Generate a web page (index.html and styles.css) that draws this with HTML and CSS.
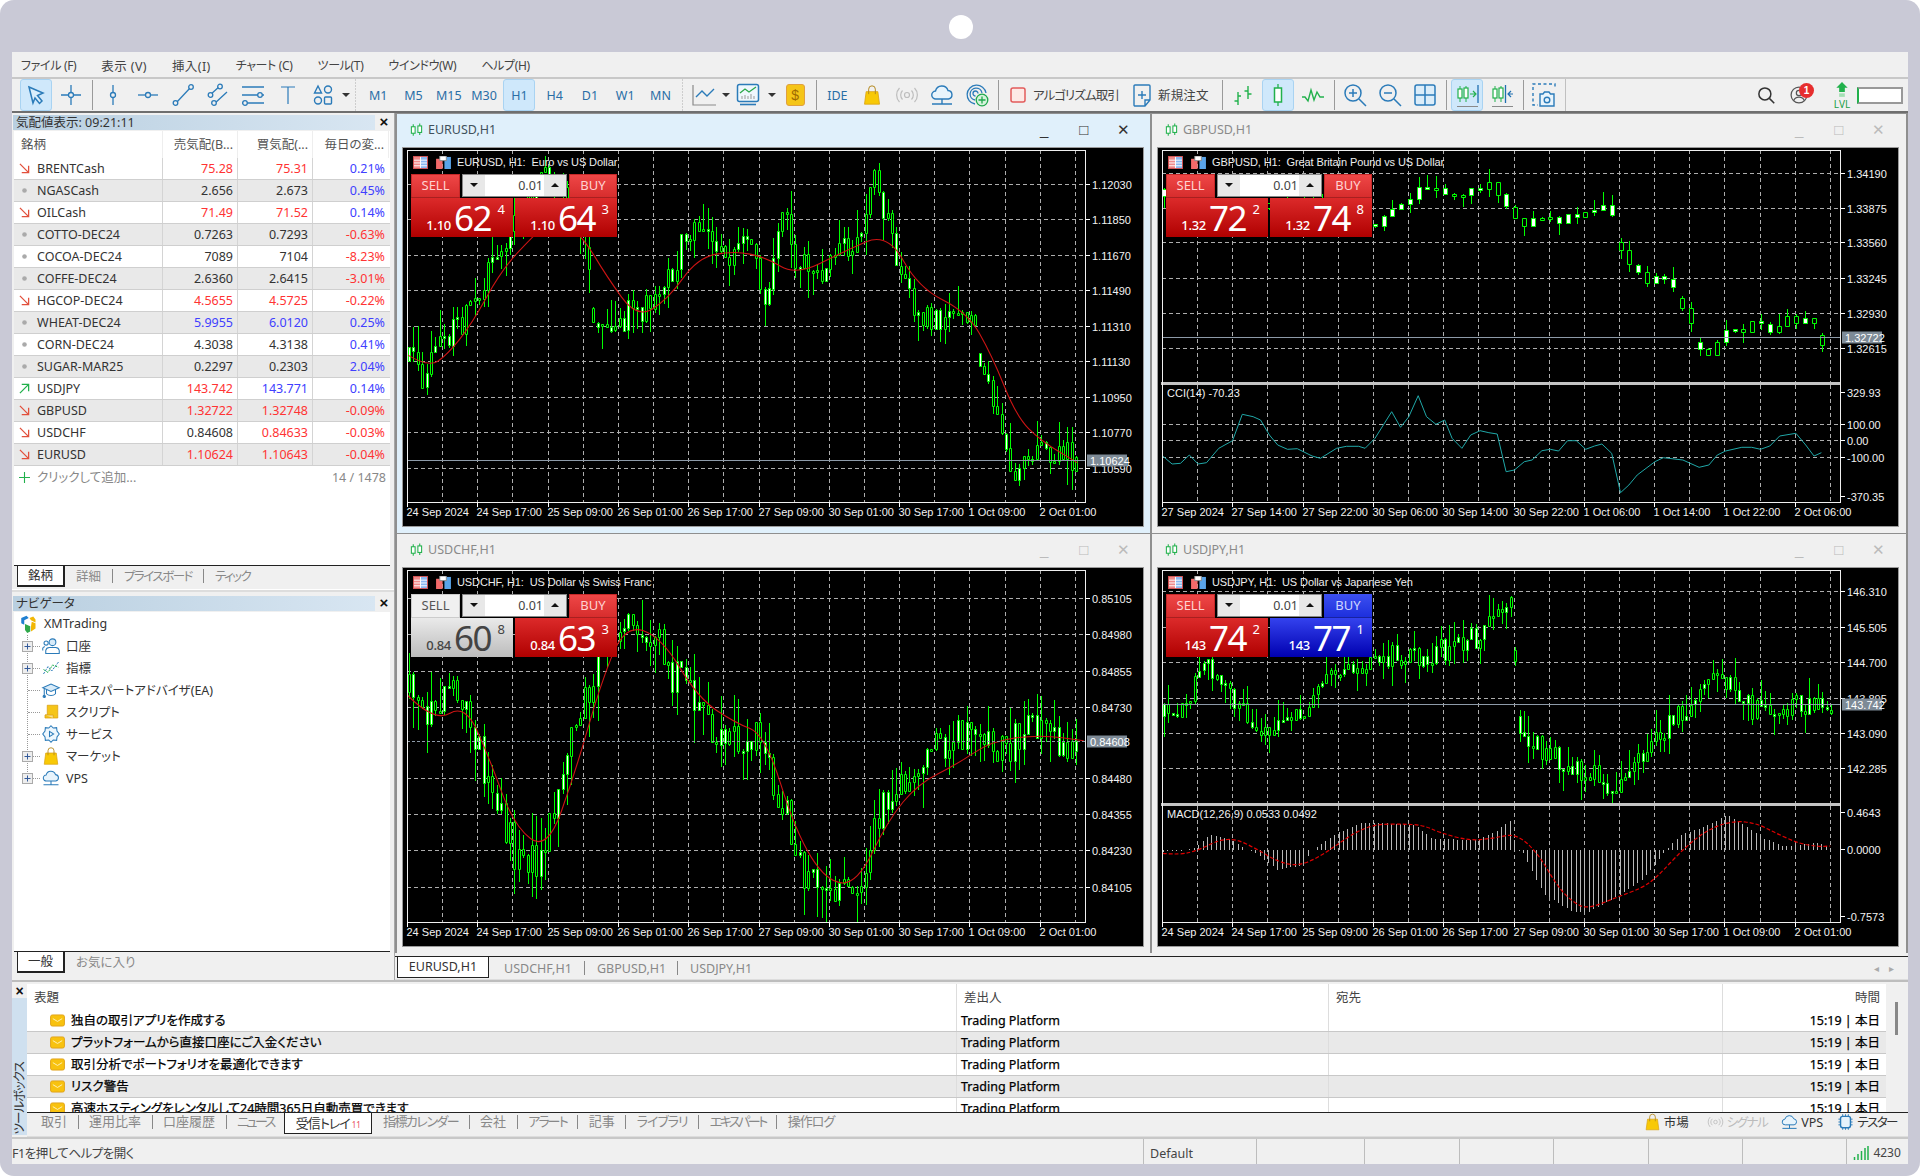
FILE: index.html
```html
<!DOCTYPE html>
<html lang="ja">
<head>
<meta charset="utf-8">
<title>MetaTrader 5</title>
<link rel="stylesheet" href="styles.css">
</head>
<body>
<svg class="defs" aria-hidden="true">
<symbol id="i-select" viewBox="0 0 24 24"><path d="M5 4 19 10 13.500 12.500 18 18 15.500 20.500 11 15 9 20Z" fill="#d9eefc" stroke="#2b7bb9" stroke-width="1.500"/></symbol>
<symbol id="i-cross" viewBox="0 0 24 24"><path d="M12 2V22M2 12H22" stroke="#2b7bb9" stroke-width="1.300"/><circle cx="12" cy="12" r="2.500" fill="#f0f0f0" stroke="#2b7bb9" stroke-width="1.300"/></symbol>
<symbol id="i-vline" viewBox="0 0 24 24"><path d="M12 2V22" stroke="#2b7bb9" stroke-width="1.300"/><circle cx="12" cy="12" r="2.500" fill="#f0f0f0" stroke="#2b7bb9" stroke-width="1.300"/></symbol>
<symbol id="i-hline" viewBox="0 0 24 24"><path d="M2 12H22" stroke="#2b7bb9" stroke-width="1.300"/><circle cx="12" cy="12" r="2.500" fill="#f0f0f0" stroke="#2b7bb9" stroke-width="1.300"/></symbol>
<symbol id="i-trend" viewBox="0 0 24 24"><path d="M5 20 20 4" stroke="#2b7bb9" stroke-width="1.300"/><circle cx="4.500" cy="20" r="2.300" fill="#f0f0f0" stroke="#2b7bb9" stroke-width="1.300"/><circle cx="20" cy="4" r="2.300" fill="#f0f0f0" stroke="#2b7bb9" stroke-width="1.300"/></symbol>
<symbol id="i-chan" viewBox="0 0 24 24"><path d="M4 12 14 3M8 21 21 9" stroke="#2b7bb9" stroke-width="1.300"/><circle cx="4.500" cy="12" r="2.300" fill="#f0f0f0" stroke="#2b7bb9" stroke-width="1.300"/><circle cx="14" cy="3.500" r="2.300" fill="#f0f0f0" stroke="#2b7bb9" stroke-width="1.300"/><circle cx="8" cy="20" r="2.300" fill="#f0f0f0" stroke="#2b7bb9" stroke-width="1.300"/></symbol>
<symbol id="i-fib" viewBox="0 0 24 24"><path d="M1 4H23M1 12H23M1 20H23" stroke="#2b7bb9" stroke-width="1.300"/><circle cx="19" cy="12" r="2.300" fill="#f0f0f0" stroke="#2b7bb9" stroke-width="1.300"/><circle cx="4" cy="20" r="2.300" fill="#f0f0f0" stroke="#2b7bb9" stroke-width="1.300"/></symbol>
<symbol id="i-t" viewBox="0 0 24 24"><path d="M5 4H19M12 4V21" stroke="#2b7bb9" stroke-width="1.200" fill="none"/></symbol>
<symbol id="i-shapes" viewBox="0 0 24 24" fill="none" stroke="#2b7bb9" stroke-width="1.400"><path d="M7 3 10.500 10H3.500Z"/><circle cx="17" cy="6.500" r="3.500"/><circle cx="7" cy="17.500" r="3.500"/><rect x="13.500" y="14" width="7" height="7" rx="1"/></symbol>
<symbol id="i-linechart" viewBox="0 0 24 24" fill="none"><path d="M1 2V22H24" stroke="#8a8a8a" stroke-width="1.200"/><path d="M4 14 10 8 15 13 22 6" stroke="#2b7bb9" stroke-width="1.400"/></symbol>
<symbol id="i-indic" viewBox="0 0 24 24" fill="none"><rect x="1.500" y="1.500" width="21" height="17" rx="2" fill="#eef7fd" stroke="#2b7bb9" stroke-width="1.500"/><path d="M4 10 9 6 13 9 20 4" stroke="#2aa84a" stroke-width="1.300"/><path d="M6 16V13M9 16V12M12 16V13M15 16V11M18 16V13" stroke="#aaa" stroke-width="1.200"/><path d="M4 21.500H20" stroke="#2b7bb9" stroke-width="1.600"/></symbol>
<symbol id="i-bag" viewBox="0 0 24 24"><path d="M5 8H19L21 23H3Z" fill="#f8c906" stroke="#dba413"/><path d="M8 11V5A4 4 0 0 1 16 5V11" fill="none" stroke="#b58a20" stroke-width="1.200"/></symbol>
<symbol id="i-signal" viewBox="0 0 24 24" fill="none" stroke="#bdbdbd" stroke-width="1.200"><circle cx="12" cy="12" r="2.500"/><path d="M7.500 7.500A6.500 6.500 0 0 0 7.500 16.500M16.500 7.500A6.500 6.500 0 0 1 16.500 16.500M4.500 5A10 10 0 0 0 4.500 19M19.500 5A10 10 0 0 1 19.500 19"/></symbol>
<symbol id="i-cloud" viewBox="0 0 24 24" fill="none" stroke="#2b7bb9" stroke-width="1.400"><path d="M6 16A4 4 0 0 1 5.500 8 6.500 6.500 0 0 1 18 7.500 4.300 4.300 0 0 1 18.500 16Z" fill="#e8f4fc"/><path d="M12 16V21M2 21H22"/></symbol>
<symbol id="i-target" viewBox="0 0 24 24" fill="none" stroke="#2b7bb9" stroke-width="1.300"><path d="M10 21A9.500 9.500 0 1 1 21 10M10 17A6 6 0 1 1 17 10M10.500 13A2.500 2.500 0 1 1 13 10.500"/><circle cx="17" cy="17" r="5.800" fill="#d6f3dd" stroke="#1fa84c"/><path d="M17 13.500V20.500M13.500 17H20.500" stroke="#1fa84c"/></symbol>
<symbol id="i-algo" viewBox="0 0 24 24"><rect x="5" y="5" width="14" height="14" rx="2" fill="#fde9e6" stroke="#e25b5b" stroke-width="1.500"/></symbol>
<symbol id="i-order" viewBox="0 0 24 24" fill="none" stroke="#2b7bb9" stroke-width="1.400"><path d="M5 2H19A1 1 0 0 1 20 3V17L15 23H5A1 1 0 0 1 4 22V3A1 1 0 0 1 5 2ZM15 23V17H20"/><path d="M12 8V16M8 12H16"/></symbol>
<symbol id="i-cbar" viewBox="0 0 24 24" fill="none" stroke="#22b14c" stroke-width="1.400"><path d="M7 9V22M3.500 18H7M7 13H10M17 3V16M13.500 8H17M17 11H20.500"/></symbol>
<symbol id="i-candle" viewBox="0 0 24 24"><path d="M12 1V23" stroke="#22b14c" stroke-width="1.300"/><rect x="8.500" y="5" width="7" height="14" fill="#fff" stroke="#22b14c" stroke-width="1.500"/></symbol>
<symbol id="i-wave" viewBox="0 0 24 24"><path d="M1 14H4L7 18 10 7 13 17 16 9 19 14H23" fill="none" stroke="#22b14c" stroke-width="1.400"/></symbol>
<symbol id="i-zin" viewBox="0 0 24 24" fill="none" stroke="#2b7bb9" stroke-width="1.500"><circle cx="10" cy="10" r="8"/><path d="M16 16 23 23M10 6V14M6 10H14"/></symbol>
<symbol id="i-zout" viewBox="0 0 24 24" fill="none" stroke="#2b7bb9" stroke-width="1.500"><circle cx="10" cy="10" r="8"/><path d="M16 16 23 23M6 10H14"/></symbol>
<symbol id="i-grid" viewBox="0 0 24 24"><rect x="2" y="2" width="20" height="20" rx="2" fill="#dcedf9" stroke="#2b7bb9" stroke-width="1.500"/><path d="M12 2V22M2 12H22" stroke="#2b7bb9" stroke-width="1.500"/></symbol>
<symbol id="i-auto" viewBox="0 0 24 24" fill="none"><path d="M5 3V19M11 3V19" stroke="#22b14c"/><rect x="3" y="6" width="4" height="9" fill="#fff" stroke="#22b14c" stroke-width="1.200"/><rect x="9" y="5" width="4" height="10" fill="#fff" stroke="#22b14c" stroke-width="1.200"/><path d="M15 11H20M18 8 21 11 18 14" stroke="#22b14c" stroke-width="1.200"/><path d="M23 2V20" stroke="#1f6fb0" stroke-width="1.300"/><path d="M2 23.500H23" stroke="#8a8a8a"/></symbol>
<symbol id="i-shift" viewBox="0 0 24 24" fill="none"><path d="M5 3V19M11 3V19" stroke="#22b14c"/><rect x="3" y="6" width="4" height="9" fill="#fff" stroke="#22b14c" stroke-width="1.200"/><rect x="9" y="5" width="4" height="10" fill="#fff" stroke="#22b14c" stroke-width="1.200"/><path d="M15.500 2V20" stroke="#1f6fb0" stroke-width="1.300"/><path d="M23 11H18M21 8 18 11 21 14" stroke="#1f6fb0" stroke-width="1.200"/><path d="M2 23.500H23" stroke="#8a8a8a"/></symbol>
<symbol id="i-cam" viewBox="0 0 24 24" fill="none" stroke="#2b7bb9" stroke-width="1.400"><path d="M1 7V1H23V6M1 10V22H6" stroke-dasharray="3 2.500"/><path d="M8 11H11L12.500 9H17L18.500 11H22V23H8Z" fill="#e8f4fc"/><circle cx="15" cy="17" r="2.800"/></symbol>
<symbol id="i-search" viewBox="0 0 24 24" fill="none" stroke="#333" stroke-width="2"><circle cx="10.500" cy="10.500" r="8"/><path d="M16.500 16.500 23 23"/></symbol>
<symbol id="i-user" viewBox="0 0 24 24" fill="none" stroke="#555" stroke-width="1.500"><circle cx="12" cy="12" r="9.500"/><circle cx="12" cy="9.500" r="3.200"/><path d="M5.500 19A7 7 0 0 1 18.500 19"/></symbol>
<symbol id="i-lvl" viewBox="0 0 24 24"><path d="M12 0 20 8H16V14H8V8H4Z" fill="#22b14c"/><path d="M8 16H16V21H8Z" fill="#a4e0b4"/></symbol>
<symbol id="i-candles" viewBox="0 0 16 16" fill="#fff" stroke="#22b14c" stroke-width="1.300"><path d="M4 1V15M12 0V14"/><rect x="1.700" y="4" width="4.600" height="8"/><rect x="9.700" y="3" width="4.600" height="8"/></symbol>
<symbol id="i-table" viewBox="0 0 16 14"><rect x=".5" y=".5" width="15" height="13" fill="#fff" stroke="#d94f4f"/><path d="M1 1H8V13H1Z" fill="#f08a8a"/><path d="M8 1H15V13H8Z" fill="#8ab8f0"/><path d="M1 4.500H15M1 7.500H15M1 10.500H15M8 1V13" stroke="#fff"/></symbol>
<symbol id="i-mt" viewBox="0 0 16 14"><rect x="0" y="3" width="7" height="11" fill="#f26a6a"/><rect x="9" y="1" width="7" height="13" fill="#5aa5ea"/><rect x="4" y="0" width="7" height="5" fill="#fff" stroke="#888"/></symbol>
<symbol id="i-dn" viewBox="0 0 12 12" fill="none" stroke="#e2503c" stroke-width="1.400"><path d="M1 1 10.500 10.500M10.500 3V10.500H3"/></symbol>
<symbol id="i-up" viewBox="0 0 12 12" fill="none" stroke="#22b14c" stroke-width="1.400"><path d="M1 11 10.500 1.500M3 1.500H10.500V9"/></symbol>
<symbol id="i-dot" viewBox="0 0 12 12"><circle cx="6" cy="6" r="2.500" fill="#aaa"/></symbol>
<symbol id="i-add" viewBox="0 0 12 12"><path d="M6 0V12M0 6H12" stroke="#22b14c" stroke-width="1.200"/></symbol>
<symbol id="i-plus" viewBox="0 0 11 11"><rect x=".5" y=".5" width="10" height="10" fill="#eee" stroke="#aaa"/><path d="M5.500 2.500V8.500M2.500 5.500H8.500" stroke="#335a9a"/></symbol>
<symbol id="i-xm" viewBox="0 0 24 24"><path d="M3 4 10 1 13 4 7 7V13L3 11Z" fill="#1f7fd1"/><path d="M14 4 19 2 22 6V10L16 7Z" fill="#f2b705"/><path d="M17 9 22 11V18L16 22V15Z" fill="#f2b705"/><path d="M8 12 15 15V22L11 24 8 20Z" fill="#2fa84a"/></symbol>
<symbol id="i-acct" viewBox="0 0 24 24" fill="none" stroke="#2b7bb9" stroke-width="1.400"><circle cx="14" cy="7" r="4.500" fill="#d8ebf9"/><circle cx="5.500" cy="8" r="2.800"/><path d="M5 22V18A5 5 0 0 1 10 14H18A5 5 0 0 1 23 18V22ZM1 18V15A3 3 0 0 1 4 13"/></symbol>
<symbol id="i-ind" viewBox="0 0 24 24" fill="none" stroke-width="1.300"><path d="M2 20 8 10 13 16 22 4" stroke="#2b7bb9" stroke-dasharray="3 1.500"/><path d="M2 14 8 18 14 8 22 11" stroke="#22b14c" stroke-dasharray="3 1.500"/></symbol>
<symbol id="i-cap" viewBox="0 0 24 24" fill="none" stroke="#2b7bb9" stroke-width="1.400"><path d="M1 9 12 4 23 9 12 14Z" fill="#d8ebf9"/><path d="M6 11.500V17C9 20 15 20 18 17V11.500M3 10V19"/><circle cx="3" cy="20.500" r="1.500" fill="#2b7bb9"/></symbol>
<symbol id="i-script" viewBox="0 0 24 24"><path d="M7 3H21V20H4V16H7Z" fill="#f5c518" stroke="#d99f10"/><path d="M4 16H15V20" fill="#fbe38a" stroke="#d99f10"/></symbol>
<symbol id="i-gear" viewBox="0 0 24 24" fill="none" stroke="#2b7bb9" stroke-width="1.400"><path d="M12 1 15 4 19.500 3.500 20 8 23 12 20 16 19.500 20.500 15 20 12 23 9 20 4.500 20.500 4 16 1 12 4 8 4.500 3.500 9 4Z" fill="#eef7fd"/><path d="M10 8.500 15.500 12 10 15.500Z"/></symbol>
<symbol id="i-chip" viewBox="0 0 24 24" fill="none" stroke="#2b7bb9" stroke-width="1.300"><rect x="5" y="4" width="14" height="16" rx="3" fill="#e5f2fb" stroke-width="2"/><path d="M8 1V4M12 1V4M16 1V4M8 20V23M12 20V23M16 20V23M2 8H5M2 12H5M2 16H5M19 8H22M19 12H22M19 16H22"/></symbol>
<symbol id="i-mail" viewBox="0 0 16 14"><rect x=".5" y="1" width="15" height="12" rx="2" fill="#f8c20f" stroke="#e0a21a"/><path d="M3 5 8 8 13 5" fill="none" stroke="#fff3c0"/></symbol>
<symbol id="i-bars" viewBox="0 0 16 14"><path d="M1.500 14V11M5 14V8M8.500 14V5M12 14V2M15 14V0" stroke="#22b14c" stroke-width="1.500"/></symbol>
</svg>

<div class="frame">
<div class="notch"></div>
<div class="app">
<nav class="menu">
<span>ファイル (F)</span><span class="kj">表示 (V)</span><span class="kj">挿入(I)</span><span>チャート (C)</span><span>ツール(T)</span><span>ウインドウ(W)</span><span>ヘルプ(H)</span>
</nav>
<div class="toolbar">
<span class="b on"><svg class="ic"><use href="#i-select"/></svg></span>
<span class="b"><svg class="ic"><use href="#i-cross"/></svg></span>
<i class="sep"></i>
<span class="b"><svg class="ic"><use href="#i-vline"/></svg></span>
<span class="b"><svg class="ic"><use href="#i-hline"/></svg></span>
<span class="b"><svg class="ic"><use href="#i-trend"/></svg></span>
<span class="b"><svg class="ic"><use href="#i-chan"/></svg></span>
<span class="b"><svg class="ic"><use href="#i-fib"/></svg></span>
<span class="b"><svg class="ic"><use href="#i-t"/></svg></span>
<span class="b"><svg class="ic"><use href="#i-shapes"/></svg></span>
<i class="caret c1"></i><i class="grip g1"></i>
<span class="b p">M1</span><span class="b p">M5</span><span class="b p">M15</span><span class="b p">M30</span><span class="b p on">H1</span><span class="b p">H4</span><span class="b p">D1</span><span class="b p">W1</span><span class="b p">MN</span>
<i class="grip g2"></i>
<span class="b"><svg class="ic"><use href="#i-linechart"/></svg></span><i class="caret c2"></i>
<span class="b"><svg class="ic"><use href="#i-indic"/></svg></span><i class="caret c3"></i>
<span class="b"><span class="dollar">$</span></span>
<i class="sep"></i>
<span class="b p ide">IDE</span>
<span class="b"><svg class="ic bag"><use href="#i-bag"/></svg></span>
<span class="b"><svg class="ic"><use href="#i-signal"/></svg></span>
<span class="b"><svg class="ic"><use href="#i-cloud"/></svg></span>
<span class="b"><svg class="ic"><use href="#i-target"/></svg></span>
<i class="sep"></i>
<span class="tb algo"><svg class="ic"><use href="#i-algo"/></svg>アルゴリズム取引</span>
<span class="tb order"><svg class="ic"><use href="#i-order"/></svg>新規注文</span>
<i class="sep"></i>
<span class="b"><svg class="ic"><use href="#i-cbar"/></svg></span>
<span class="b on"><svg class="ic"><use href="#i-candle"/></svg></span>
<span class="b"><svg class="ic"><use href="#i-wave"/></svg></span>
<i class="sep"></i>
<span class="b"><svg class="ic"><use href="#i-zin"/></svg></span>
<span class="b"><svg class="ic"><use href="#i-zout"/></svg></span>
<span class="b"><svg class="ic"><use href="#i-grid"/></svg></span>
<i class="sep"></i>
<span class="b on"><svg class="ic"><use href="#i-auto"/></svg></span>
<span class="b"><svg class="ic"><use href="#i-shift"/></svg></span>
<i class="sep"></i>
<span class="b"><svg class="ic"><use href="#i-cam"/></svg></span>
<i class="grip g3"></i>
<span class="tright">
<span class="b"><svg class="ic srch"><use href="#i-search"/></svg></span>
<span class="b notif"><svg class="ic usr"><use href="#i-user"/></svg><em class="badge">1</em></span>
<span class="lvl"><svg class="sm"><use href="#i-lvl"/></svg><b>LVL</b></span>
<span class="meter"></span>
</span>
</div>

<div class="work">
<aside class="left">
<section class="watch">
<header class="ptitle"><span class="pt">気配値表示: 09:21:11</span><span class="px">×</span></header>
<div class="tbl">
<div class="r hd"><span class="c">銘柄</span><span>売気配(B...</span><span>買気配(...</span><span>毎日の変...</span></div>
<div class="r"><span class="c"><svg class="ar"><use href="#i-dn"/></svg>BRENTCash</span><span class="red">75.28</span><span class="red">75.31</span><span class="blu">0.21%</span></div>
<div class="r"><span class="c"><svg class="ar"><use href="#i-dot"/></svg>NGASCash</span><span>2.656</span><span>2.673</span><span class="blu">0.45%</span></div>
<div class="r"><span class="c"><svg class="ar"><use href="#i-dn"/></svg>OILCash</span><span class="red">71.49</span><span class="red">71.52</span><span class="blu">0.14%</span></div>
<div class="r"><span class="c"><svg class="ar"><use href="#i-dot"/></svg>COTTO-DEC24</span><span>0.7263</span><span>0.7293</span><span class="red">-0.63%</span></div>
<div class="r"><span class="c"><svg class="ar"><use href="#i-dot"/></svg>COCOA-DEC24</span><span>7089</span><span>7104</span><span class="red">-8.23%</span></div>
<div class="r"><span class="c"><svg class="ar"><use href="#i-dot"/></svg>COFFE-DEC24</span><span>2.6360</span><span>2.6415</span><span class="red">-3.01%</span></div>
<div class="r"><span class="c"><svg class="ar"><use href="#i-dn"/></svg>HGCOP-DEC24</span><span class="red">4.5655</span><span class="red">4.5725</span><span class="red">-0.22%</span></div>
<div class="r"><span class="c"><svg class="ar"><use href="#i-dot"/></svg>WHEAT-DEC24</span><span class="blu">5.9955</span><span class="blu">6.0120</span><span class="blu">0.25%</span></div>
<div class="r"><span class="c"><svg class="ar"><use href="#i-dot"/></svg>CORN-DEC24</span><span>4.3038</span><span>4.3138</span><span class="blu">0.41%</span></div>
<div class="r"><span class="c"><svg class="ar"><use href="#i-dot"/></svg>SUGAR-MAR25</span><span>0.2297</span><span>0.2303</span><span class="blu">2.04%</span></div>
<div class="r"><span class="c"><svg class="ar"><use href="#i-up"/></svg>USDJPY</span><span class="red">143.742</span><span class="blu">143.771</span><span class="blu">0.14%</span></div>
<div class="r"><span class="c"><svg class="ar"><use href="#i-dn"/></svg>GBPUSD</span><span class="red">1.32722</span><span class="red">1.32748</span><span class="red">-0.09%</span></div>
<div class="r"><span class="c"><svg class="ar"><use href="#i-dn"/></svg>USDCHF</span><span>0.84608</span><span class="red">0.84633</span><span class="red">-0.03%</span></div>
<div class="r"><span class="c"><svg class="ar"><use href="#i-dn"/></svg>EURUSD</span><span class="red">1.10624</span><span class="red">1.10643</span><span class="red">-0.04%</span></div>
<div class="addrow"><span class="c"><svg class="ar add"><use href="#i-add"/></svg>クリックして追加...</span><span>14 / 1478</span></div>
</div>
<div class="tabs wt"><span class="act w48">銘柄</span><span>詳細</span><i></i><span class="k">プライスボード</span><i></i><span class="k">ティック</span></div>
</section>
<section class="navi">
<header class="ptitle"><span class="pt">ナビゲータ</span><span class="px">×</span></header>
<div class="list">
<div class="rootrow"><svg class="nic"><use href="#i-xm"/></svg>XMTrading</div>
<div class="tree">
<div class="node"><svg class="pl"><use href="#i-plus"/></svg><i class="con"></i><svg class="nic"><use href="#i-acct"/></svg>口座</div>
<div class="node"><svg class="pl"><use href="#i-plus"/></svg><i class="con"></i><svg class="nic"><use href="#i-ind"/></svg>指標</div>
<div class="node"><i class="con lg"></i><svg class="nic"><use href="#i-cap"/></svg>エキスパートアドバイザ(EA)</div>
<div class="node"><i class="con lg"></i><svg class="nic"><use href="#i-script"/></svg>スクリプト</div>
<div class="node"><i class="con lg"></i><svg class="nic"><use href="#i-gear"/></svg>サービス</div>
<div class="node"><svg class="pl"><use href="#i-plus"/></svg><i class="con"></i><svg class="nic"><use href="#i-bag"/></svg>マーケット</div>
<div class="node"><svg class="pl"><use href="#i-plus"/></svg><i class="con"></i><svg class="nic"><use href="#i-cloud"/></svg>VPS</div>
</div>
</div>
<div class="tabs wt"><span class="act w48">一般</span><span>お気に入り</span></div>
</section>
</aside>

<main class="area">
<div class="wins">
<article class="win active">
<header class="wt-bar"><svg class="cnd"><use href="#i-candles"/></svg><span>EURUSD,H1</span><span class="ctl"><b>_</b><b>□</b><b>✕</b></span></header>
<div class="cv" data-chart="eur"><div class="ov">
<div class="ovt"><svg class="oi"><use href="#i-table"/></svg><svg class="oi"><use href="#i-mt"/></svg><span>EURUSD, H1:  Euro vs US Dollar</span></div>
<div class="tp1"><span class="tbtn sell">SELL</span><span class="lot"><b class="dn"></b><span class="lv">0.01</span><b class="up"></b></span><span class="tbtn buy">BUY</span></div>
<div class="tp2"><span class="pr"><small>1.10</small><strong>62</strong><sup>4</sup></span><span class="pr"><small>1.10</small><strong>64</strong><sup>3</sup></span></div>
</div></div>
</article>
<article class="win">
<header class="wt-bar"><svg class="cnd"><use href="#i-candles"/></svg><span>GBPUSD,H1</span><span class="ctl"><b>_</b><b>□</b><b>✕</b></span></header>
<div class="cv" data-chart="gbp"><div class="ov">
<div class="ovt"><svg class="oi"><use href="#i-table"/></svg><svg class="oi"><use href="#i-mt"/></svg><span>GBPUSD, H1:  Great Britain Pound vs US Dollar</span></div>
<div class="tp1"><span class="tbtn sell">SELL</span><span class="lot"><b class="dn"></b><span class="lv">0.01</span><b class="up"></b></span><span class="tbtn buy">BUY</span></div>
<div class="tp2"><span class="pr"><small>1.32</small><strong>72</strong><sup>2</sup></span><span class="pr"><small>1.32</small><strong>74</strong><sup>8</sup></span></div>
</div></div>
</article>
<article class="win">
<header class="wt-bar"><svg class="cnd"><use href="#i-candles"/></svg><span>USDCHF,H1</span><span class="ctl"><b>_</b><b>□</b><b>✕</b></span></header>
<div class="cv" data-chart="chf"><div class="ov">
<div class="ovt"><svg class="oi"><use href="#i-table"/></svg><svg class="oi"><use href="#i-mt"/></svg><span>USDCHF, H1:  US Dollar vs Swiss Franc</span></div>
<div class="tp1"><span class="tbtn sell gry">SELL</span><span class="lot"><b class="dn"></b><span class="lv">0.01</span><b class="up"></b></span><span class="tbtn buy">BUY</span></div>
<div class="tp2"><span class="pr gry"><small>0.84</small><strong>60</strong><sup>8</sup></span><span class="pr"><small>0.84</small><strong>63</strong><sup>3</sup></span></div>
</div></div>
</article>
<article class="win">
<header class="wt-bar"><svg class="cnd"><use href="#i-candles"/></svg><span>USDJPY,H1</span><span class="ctl"><b>_</b><b>□</b><b>✕</b></span></header>
<div class="cv" data-chart="jpy"><div class="ov">
<div class="ovt"><svg class="oi"><use href="#i-table"/></svg><svg class="oi"><use href="#i-mt"/></svg><span>USDJPY, H1:  US Dollar vs Japanese Yen</span></div>
<div class="tp1"><span class="tbtn sell">SELL</span><span class="lot"><b class="dn"></b><span class="lv">0.01</span><b class="up"></b></span><span class="tbtn buy bl">BUY</span></div>
<div class="tp2"><span class="pr"><small>143</small><strong>74</strong><sup>2</sup></span><span class="pr bl"><small>143</small><strong>77</strong><sup>1</sup></span></div>
</div></div>
</article>
</div>
<div class="tabs ct"><span class="act w93">EURUSD,H1</span><span>USDCHF,H1</span><i></i><span>GBPUSD,H1</span><i></i><span>USDJPY,H1</span><em class="arrows">◂&nbsp;&nbsp;&nbsp;&nbsp;▸</em></div>
</main>
</div>

<section class="toolbox">
<div class="strip"><span class="sx">×</span><span class="sv"><span class="vt">ツールボックス</span></span></div>
<div class="tbody">
<div class="mailtbl">
<div class="m mh"><span>表題</span><span>差出人</span><span>宛先</span><span class="tm">時間</span></div>
<div class="m"><span class="sj"><svg class="ml"><use href="#i-mail"/></svg>独自の取引アプリを作成する</span><span>Trading Platform</span><span></span><span class="tm">15:19 | 本日</span></div>
<div class="m"><span class="sj"><svg class="ml"><use href="#i-mail"/></svg>プラットフォームから直接口座にご入金ください</span><span>Trading Platform</span><span></span><span class="tm">15:19 | 本日</span></div>
<div class="m"><span class="sj"><svg class="ml"><use href="#i-mail"/></svg>取引分析でポートフォリオを最適化できます</span><span>Trading Platform</span><span></span><span class="tm">15:19 | 本日</span></div>
<div class="m"><span class="sj"><svg class="ml"><use href="#i-mail"/></svg>リスク警告</span><span>Trading Platform</span><span></span><span class="tm">15:19 | 本日</span></div>
<div class="m"><span class="sj"><svg class="ml"><use href="#i-mail"/></svg>高速ホスティングをレンタルして24時間365日自動売買できます</span><span>Trading Platform</span><span></span><span class="tm">15:19 | 本日</span></div>
</div>
<div class="sb"><i></i></div>
</div>
<div class="tabs tt"><span>取引</span><i></i><span>運用比率</span><i></i><span>口座履歴</span><i></i><span class="k3">ニュース</span><span class="act w88"><span class="k1">受信トレイ</span><small>11</small></span><span class="k">指標カレンダー</span><i></i><span>会社</span><i></i><span class="k2">アラート</span><i></i><span>記事</span><i></i><span class="k1">ライブラリ</span><i></i><span class="k3">エキスパート</span><i></i><span class="k1">操作ログ</span>
<span class="tlinks"><a class="mk"><svg class="tl"><use href="#i-bag"/></svg>市場</a><a class="off"><svg class="tl"><use href="#i-signal"/></svg><span class="k">シグナル</span></a><a><svg class="tl"><use href="#i-cloud"/></svg>VPS</a><a><svg class="tl"><use href="#i-chip"/></svg><span class="k">テスター</span></a></span></div>
</section>
<footer class="status"><span class="s1">F1を押してヘルプを開く</span><span class="s2">Default</span><span class="s3a"></span><span class="s3"></span><span class="s3"></span><span class="s3"></span><span class="s3"></span><span class="s4"></span><span class="s5"><svg class="br"><use href="#i-bars"/></svg>4230</span></footer>
</div>
</div>
<script src="chart.js"></script>
</body>
</html>
```
FILE: styles.css
```css
*{box-sizing:border-box}
html,body{margin:0;padding:0;background:#fff}
body{font:12.5px/1.2 "Noto Sans","Noto Sans CJK JP",sans-serif;color:#333;font-feature-settings:"palt";width:1920px;height:1176px;overflow:hidden}
.defs{width:0;height:0;display:block;overflow:hidden}
.frame{width:1920px;height:1176px;background:#c9c9d6;border-radius:14px;padding:52px 12px 12px;position:relative}
.notch{position:absolute;left:949px;top:15px;width:24px;height:24px;border-radius:50%;background:#fff}
.app{width:1896px;height:1112px;background:#f0f0f0;display:flex;flex-direction:column}

.menu{height:27px;border-bottom:2px solid #c8c8c8;display:flex;align-items:center;gap:25px;padding:3px 0 0 9px;color:#444;font-size:12px;letter-spacing:-.35px}
.menu .kj{font-size:12.500px;letter-spacing:.4px}
.toolbar{height:34px;flex:none;border-bottom:2px solid #6f6f6f;display:flex;align-items:center;padding-left:6.500px;color:#2a6ea6}
.b{width:35px;height:32px;flex:none;display:flex;align-items:center;justify-content:center;position:relative;font-size:12.500px;border:1px solid transparent;border-radius:3px}
.b.p{width:35.300px}
.b.on{background:#cfe8fb;border-color:#a9d3f2;margin:0 1.500px;width:32px}
.b.p.on{width:32.300px}
.ic{width:24px;height:24px;flex:none}
.bag{width:20px;height:22px}
.srch{width:18px;height:18px}
.usr{width:20px;height:20px;margin-right:4px}
.dollar{width:19px;height:22px;border-radius:3px;background:#f5c518;border:1px solid #e0a040;color:#a06a00;text-align:center;font:14px/20px "Liberation Sans",sans-serif}
.sep{width:7px;height:30px;flex:none;background:linear-gradient(#9a9a9a,#9a9a9a) center/1px 100% no-repeat}
.grip{height:32px;flex:none;background:radial-gradient(circle,#aaa 0.700px,transparent 1px) center/3px 3px repeat-y}
.g1{width:10px}.g2{width:8px}.g3{width:7px;background:linear-gradient(#c0c0c0,#c0c0c0) center/1px 100% no-repeat}
.caret{flex:none;height:10px;position:relative}
.caret::after{content:"";display:block;width:0;height:0;margin:3px auto 0;border:4px solid transparent;border-top-color:#333;border-bottom:0}
.c1{width:10px}.c2{width:9.500px}.c3{width:12px}
.tb{display:flex;align-items:center;flex:none;color:#444;height:32px;white-space:nowrap}
.algo{width:120px;padding-left:4px;gap:3px;letter-spacing:-.9px}
.order{width:97px;padding-left:8px;gap:4px;letter-spacing:.2px}
.ide{color:#2a6ea6}
.tright{margin-left:auto;display:flex;align-items:center;padding-right:4px}
.notif{overflow:visible}
.badge{position:absolute;left:15px;top:3px;width:15px;height:15px;border-radius:50%;background:#e62e2e;color:#fff;font:700 10px/15px "Liberation Sans",sans-serif;text-align:center}
.lvl{width:34px;margin-left:7px;display:flex;flex-direction:column;align-items:center;line-height:10px;font-size:10px;color:#22a047}
.lvl b{font-weight:400}
.sm{width:18px;height:17px}
.meter{width:46px;height:17px;margin-left:-2px;margin-right:1px;border:2px solid #999;border-left-color:#22b14c;background:#fff}

.work{height:867px;flex:none;display:grid;grid-template-columns:383px 1fr}
.left{display:flex;flex-direction:column;border-right:1px solid #a8a8a8}
.watch{height:477px;flex:none;display:flex;flex-direction:column;padding-top:2px;border-bottom:1px solid #fff}
.navi{flex:1;display:flex;flex-direction:column;padding-top:4px;border-top:2px solid #ddd;padding-bottom:5px}
.ptitle{height:15px;flex:none;display:flex;margin:0 1px 1px 1px}
.pt{flex:0 0 362px;background:linear-gradient(90deg,#b9cfe0,#d8e6f2);padding-left:3px;line-height:15px;color:#333}
.px{flex:1;text-align:center;font:700 15px/14px "Liberation Sans",sans-serif;color:#111}
.tbl{flex:1;margin:0 4px 0 2px;background:#fff;min-height:0}
.r{display:grid;grid-template-columns:149px 75px 75px 76px;height:22px;align-items:center;text-align:right;border-bottom:1px solid #cfcfcf;color:#333}
.r>span{padding-right:4px;height:100%;display:flex;align-items:center;justify-content:flex-end;border-right:1px solid #d4d4d4}
.r>span:last-child{border-right:0}
.r>.c{justify-content:flex-start;padding-left:5px}
.r:nth-child(odd){background:#e9e9e9}
.r.hd{height:27px;background:#fff;border-bottom:0;color:#555}
.r.hd>span{border-right:1px solid #eee}
.r.hd>.c{padding-left:7px}
.ar{width:11px;height:11px;margin-right:7px;flex:none}
.add{margin-right:7px}
.red{color:#ff3333}.blu{color:#4040ff}
.addrow{display:flex;justify-content:space-between;align-items:center;height:22px;color:#888;padding:0 4px 0 5px}
.addrow .c{display:flex;align-items:center}
.tabs{display:flex;align-items:center;flex:none;color:#888;gap:11px}
.tabs>i{width:1px;height:14px;background:#888;flex:none}
.tabs .act{background:#fff;color:#333;border:1px solid #222;border-top:0;text-align:center;align-self:flex-start;line-height:20px;height:21px}
.k{letter-spacing:-1.500px}.k1{letter-spacing:-1px}.k2{letter-spacing:-1.900px}.k3{letter-spacing:-2.500px}
.wt{height:24px;border-top:1px solid #222;padding-left:3px;margin-left:2px;margin-right:4px;padding-bottom:3px}
.wt .act{border-width:0 2px 2px 1px}
.w48{width:48px}.w93{width:93px}.w88{width:88px}
.list{flex:1;margin:0 4px 0 2px;background:#fff;min-height:0}
.rootrow{display:flex;align-items:center;height:23px;padding-left:3px;gap:6px}
.nic{width:22px;height:18px;flex:none;margin-right:4.500px}
.rootrow .nic{width:22px;margin:0 -1px 0 0}
.tree{margin-left:12.500px;width:300px;border-left:1px dotted #999;height:143px;display:flex;flex-direction:column}
.node{height:22px;flex:none;display:flex;align-items:center}
.pl{width:11px;height:11px;flex:none;margin-left:-6px}
.con{height:0;width:7px;border-top:1px dotted #999;flex:none}
.con.lg{width:12px}

.area{display:flex;flex-direction:column;min-width:0}
.wins{height:840px;padding:1px 2px 0 2px;display:grid;grid-template-columns:753px 754px;grid-template-rows:419px 419px;gap:1px 2px;background:#8f8f8f}
.win{background:#f0f0f0;display:flex;flex-direction:column;padding:0 7px 7px 6px;position:relative}
.win:nth-child(even){padding:0 8px 7px 6px}
.win.active{background:#e0f0fb}
.wt-bar{height:34px;flex:none;margin:0 -7px 0 -6px;padding:0 0 3px 13px;display:flex;align-items:center;color:#8a8a8a;gap:5px}
.win.active .wt-bar{color:#40505c}
.cnd{width:13px;height:14px}
.ctl{margin-left:auto;display:flex;padding-right:7px;color:#bbb}
.win.active .ctl{color:#333}
.ctl b{width:39.500px;text-align:center;font:400 15px/15px "Liberation Sans",sans-serif}
.cv{flex:1;background:#000;position:relative;box-shadow:0 0 0 1px #9a9a9a;overflow:hidden}
.cv svg.plot{display:block;width:740px;height:378px;font:11px "Liberation Sans",sans-serif}
.ov{position:absolute;left:8px;top:7px;width:206px;z-index:2}
.ovt{display:flex;align-items:center;height:15px;gap:8px;color:#eee;font:11px/15px "Liberation Sans",sans-serif;white-space:pre;margin-left:2px;margin-bottom:4px;width:300px;letter-spacing:-.1px}
.oi{width:15px;height:13px;flex:none}
.ovt span{margin-left:-2px}
.tp1{display:flex;gap:2px;height:24px}
.tbtn{width:49px;background:linear-gradient(#f04848,#d62c2c);color:#ffd2d2;text-align:center;font:13px/22px "Noto Sans",sans-serif;box-shadow:inset 0 -1px 0 #a82020,inset 0 0 0 1px #c62828;flex:none}
.tbtn.buy{width:48px}
.tbtn.gry{background:#f0f0f0;color:#555;box-shadow:inset 0 0 0 1px #ccc}
.tbtn.bl{background:linear-gradient(#3c50f0,#1c2edc);color:#cfd6ff;box-shadow:inset 0 -1px 0 #1822a0}
.lot{flex:1;height:23px;background:#fff;border:1px solid #888;display:flex;align-items:center;color:#444;font:12.5px/21px "Noto Sans",sans-serif}
.lot b{width:22px;height:21px;background:#e8e8e8;flex:none;position:relative}
.lot b::after{content:"";position:absolute;left:7px;top:8px;border:4px solid transparent}
.lot .dn::after{border-top-color:#111;border-bottom:0}
.lot .up::after{border-bottom-color:#111;border-top:0}
.lv{flex:1;text-align:right;padding-right:1px}
.tp2{display:flex;gap:2px;height:39px;color:#fff}
.pr{flex:1;background:linear-gradient(#dc2a2a,#b00000);display:flex;align-items:flex-start;justify-content:flex-end;padding-right:8px;font-family:"Noto Sans",sans-serif}
.pr small{font-size:13px;font-weight:500;margin-top:17px;margin-right:3px;line-height:20px;letter-spacing:-.3px}
.pr strong{font-size:35px;font-weight:400;line-height:39px;letter-spacing:-1.500px}
.pr sup{font-size:13px;line-height:16px;width:14px;text-align:right;margin-top:3px}
.pr.gry{background:linear-gradient(#eaeaea,#bcbcbc);color:#444}
.pr.bl{background:linear-gradient(#3442ee,#0000b0)}

.ct{border-top:1px solid #222;margin-top:3px;height:24px;padding-left:2px;gap:12px;border-bottom:1px solid #ddd}
.ct .act{width:92px;height:21px}
.ct>span:not(.act){width:68px}
.ct>span:nth-child(2){margin-left:3px}
.arrows{margin-left:auto;padding-right:14px;font-style:normal;color:#aaa;font-size:10px}

.toolbox{height:157px;flex:none;border-top:2px solid #bdbdbd;padding-top:2px;display:grid;grid-template-columns:15px 1fr;grid-template-rows:128px 25px}
.strip{grid-row:1/3;display:flex;flex-direction:column}
.sx{font:700 14px/14px "Liberation Sans",sans-serif;text-align:center;color:#111;height:14px}
.sv{flex:1;background:#cfe0ef;margin-bottom:2px;display:flex;justify-content:center;align-items:flex-end;overflow:hidden}
.vt{writing-mode:vertical-rl;text-orientation:sideways;transform:rotate(180deg);white-space:nowrap;line-height:15px;letter-spacing:-1px}
.tbody{display:flex;min-height:0;overflow:hidden}
.mailtbl{width:1859px;background:#fff;overflow:hidden;flex:none;color:#000}
.m{display:grid;grid-template-columns:929px 372px 394px 164px;height:22px;align-items:center;border-bottom:1px solid #c8c8c8;-webkit-text-stroke:.25px #000}
.m>span{height:100%;display:flex;align-items:center;padding-left:4px;border-left:1px solid #ddd;white-space:nowrap}
.m>span:first-child{border-left:0}
.m:nth-child(odd){background:#e9e9e9}
.m.mh{height:26px;background:#fff;border-bottom:0;color:#444;-webkit-text-stroke:0}
.m.mh>span{padding-left:7px}
.m>.tm{justify-content:flex-end;padding:0 6px 0 0}
.m>.sj{padding-left:23px}
.ml{width:15px;height:13px;margin-right:6px;flex:none}
.sb{flex:1;display:flex;justify-content:center;padding-top:18px}
.sb i{width:3px;height:33px;background:#888;margin-right:1px}
.tt{border-top:1px solid #222;padding-left:14px;height:25px;border-bottom:1px solid #ddd;padding-bottom:5px;font-size:13px;gap:10.500px}
.tt small{color:#e8505c;font-size:8px;margin-left:2px}
.tlinks{margin-left:auto;display:flex;gap:14px;color:#333;padding-right:11px;font-size:12.500px}
.tlinks a{display:flex;align-items:center;gap:3px}
.tlinks .mk{margin-right:4px}
.tlinks .off{color:#bbb}
.tl{width:17px;height:18px;flex:none}
.status{height:27px;flex:none;border-top:2px solid #c8c8c8;display:flex;align-items:center;color:#444}
.status>span{height:100%;display:flex;align-items:center;border-left:1px solid #bdbdbd;padding-top:3px}
.s1{width:1131px;border-left:0!important;letter-spacing:-.5px}
.s2{width:113px;padding-left:6px}
.s3a{width:108px}
.s3{width:94.600px}
.s4{width:104px}
.s5{flex:1;padding-left:6px;gap:4px;font-size:12px}
.br{width:16px;height:14px}
```
FILE: chart.js
```js
(function () {
  var S = 1.2245, NS = 'http://www.w3.org/2000/svg';
  var L = 4, T = 2, R = 682, B = 354;
  var T1 = ['24 Sep 2024', '24 Sep 17:00', '25 Sep 09:00', '26 Sep 01:00', '26 Sep 17:00', '27 Sep 09:00', '30 Sep 01:00', '30 Sep 17:00', '1 Oct 09:00', '2 Oct 01:00'];
  var T2 = ['27 Sep 2024', '27 Sep 14:00', '27 Sep 22:00', '30 Sep 06:00', '30 Sep 14:00', '30 Sep 22:00', '1 Oct 06:00', '1 Oct 14:00', '1 Oct 22:00', '2 Oct 06:00'];
  var CFG = {
    eur: { left: 403, top: 148, amp: 30, seed: 77, step: 4.39, bw: 2, times: T1,
      curve: [[333,295],[345,305],[360,285],[375,265],[390,235],[410,195],[430,170],[450,140],[470,170],[478,200],[485,265],[500,275],[515,255],[530,250],[545,225],[565,185],[580,195],[595,205],[610,190],[625,240],[640,165],[650,210],[665,225],[680,215],[695,200],[715,148],[725,185],[735,215],[750,260],[765,258],[780,260],[795,260],[800,300],[810,325],[820,365],[830,385],[845,365],[860,370],[875,372],[882,378]],
      ma: [[333,290],[350,300],[365,290],[385,265],[410,220],[435,193],[455,175],[477,195],[495,225],[520,260],[545,245],[570,210],[600,205],[625,210],[650,225],[690,205],[725,190],[750,235],[790,255],[810,290],[830,340],[850,360],[880,378]],
      prices: [['1.12030',150],['1.11850',179],['1.11670',208],['1.11490',237],['1.11310',266],['1.11130',295],['1.10950',324],['1.10770',353],['1.10590',382]],
      last: ['1.10624',376] },
    gbp: { left: 1158, top: 148, amp: 14, seed: 131, step: 8.78, bw: 4, times: T2, mainB: 235,
      curve: [[950,160],[1000,170],[1060,165],[1125,180],[1145,172],[1160,145],[1175,155],[1195,160],[1210,150],[1225,160],[1240,182],[1260,183],[1285,175],[1300,170],[1315,170],[1325,210],[1345,228],[1365,235],[1380,265],[1395,295],[1405,270],[1420,265],[1440,268],[1455,262],[1475,262],[1490,278]],
      prices: [['1.34190',141],['1.33875',170],['1.33560',198],['1.33245',227],['1.32930',256],['1.32615',284]],
      last: ['1.32722',275],
      sub: { type: 'cci', title: 'CCI(14) -70.23',
        levels: [['329.93',392,0],['100.00',424,1],['0.00',440,1],['-100.00',457,1],['-370.35',496,0]],
        line: [[25,257],[45,282],[62,280],[80,255],[98,282],[115,278],[140,235],[168,212],[188,133],[210,140],[225,150],[243,195],[260,225],[280,238],[300,236],[330,258],[347,265],[380,235],[400,229],[425,229],[438,235],[458,205],[492,125],[510,172],[527,140],[546,77],[563,140],[582,163],[600,150],[615,205],[635,235],[653,195],[672,182],[690,188],[707,192],[725,305],[742,300],[762,275],[778,270],[798,242],[815,238],[832,243],[850,212],[868,212],[887,238],[905,228],[920,222],[940,250],[958,368],[975,345],[992,315],[1028,275],[1045,263],[1085,270],[1118,292],[1138,285],[1155,255],[1172,243],[1205,232],[1225,232],[1243,238],[1262,228],[1282,198],[1315,190],[1335,225],[1352,258],[1367,248]] } },
    chf: { left: 403, top: 568, amp: 40, seed: 211, step: 4.39, bw: 2, times: T1,
      curve: [[333,565],[350,590],[365,560],[385,590],[400,640],[420,695],[440,710],[455,650],[470,590],[490,530],[510,505],[530,510],[550,550],[575,590],[600,600],[620,600],[640,660],[660,720],[680,740],[700,720],[720,660],[740,640],[760,615],[780,600],[800,610],[820,610],[840,595],[860,605],[880,625]],
      ma: [[333,568],[355,590],[380,575],[400,620],[420,675],[447,695],[470,630],[490,560],[510,510],[540,520],[570,570],[600,590],[625,600],[650,680],[675,720],[700,722],[725,670],[750,640],[780,625],[810,605],[850,600],[885,605]],
      prices: [['0.85105',488],['0.84980',518],['0.84855',548],['0.84730',577],['0.84480',635],['0.84355',665],['0.84230',694],['0.84105',724]],
      last: ['0.84608',605], dashLast: true },
    jpy: { left: 1158, top: 568, amp: 24, seed: 397, step: 4.39, bw: 2, times: T1, mainB: 236,
      curve: [[950,585],[965,575],[985,545],[1005,570],[1020,590],[1040,600],[1060,585],[1080,560],[1100,550],[1130,535],[1160,535],[1180,530],[1210,520],[1235,480],[1240,590],[1255,610],[1280,625],[1300,630],[1320,645],[1340,615],[1365,590],[1385,565],[1405,550],[1425,575],[1445,585],[1470,575],[1490,570],[1497,578]],
      prices: [['146.310',483],['145.505',512],['144.700',541],['143.895',570],['143.090',599],['142.285',627]],
      last: ['143.742',575],
      sub: { type: 'macd', title: 'MACD(12,26,9) 0.0533 0.0492',
        levels: [['0.4643',812,0],['0.0000',849,0],['-0.7573',916,0]],
        hist: [[25,185],[60,183],[90,175],[120,135],[160,145],[190,175],[215,190],[260,240],[310,225],[330,180],[380,130],[430,98],[480,100],[540,105],[575,148],[620,148],[660,152],[700,128],[735,90],[745,180],[760,190],[800,310],[860,365],[890,368],[950,320],[1000,270],[1030,220],[1050,180],[1080,135],[1130,110],[1175,75],[1210,105],[1250,145],[1290,170],[1360,158],[1385,175]],
        line: [[25,190],[60,195],[100,180],[140,150],[175,147],[215,175],[260,215],[300,228],[340,205],[380,165],[420,125],[460,103],[510,102],[555,105],[590,128],[650,152],[700,145],[745,130],[790,190],[830,290],[860,335],[890,358],[950,322],[1000,295],[1030,265],[1090,170],[1140,115],[1190,92],[1235,100],[1275,130],[1320,160],[1360,170],[1385,168]] } }
  };

  function el(name, attrs, parent, text) {
    var e = document.createElementNS(NS, name);
    for (var k in attrs) e.setAttribute(k, attrs[k]);
    if (text !== undefined) e.textContent = text;
    if (parent) parent.appendChild(e);
    return e;
  }
  function rng(seed) { return function () { seed = (seed * 16807) % 2147483647; return seed / 2147483647; }; }
  function interp(p, x) {
    if (x <= p[0][0]) return p[0][1];
    for (var i = 1; i < p.length; i++) {
      if (x <= p[i][0]) {
        var t = (x - p[i - 1][0]) / (p[i][0] - p[i - 1][0]);
        return p[i - 1][1] + t * (p[i][1] - p[i - 1][1]);
      }
    }
    return null;
  }
  function poly(p) { return 'M' + p.map(function (q) { return q[0].toFixed(1) + ' ' + q[1].toFixed(1); }).join('L'); }
  function smooth(p) {
    var d = 'M' + p[0][0].toFixed(1) + ' ' + p[0][1].toFixed(1);
    for (var i = 1; i < p.length - 1; i++) {
      var mx = (p[i][0] + p[i + 1][0]) / 2, my = (p[i][1] + p[i + 1][1]) / 2;
      d += 'Q' + p[i][0].toFixed(1) + ' ' + p[i][1].toFixed(1) + ' ' + mx.toFixed(1) + ' ' + my.toFixed(1);
    }
    var e = p[p.length - 1];
    return d + 'L' + e[0].toFixed(1) + ' ' + e[1].toFixed(1);
  }
  function dashes(x1, y1, x2, y2) { return { x1: x1, y1: y1, x2: x2, y2: y2, stroke: '#adadad', 'stroke-dasharray': '4 3' }; }

  Object.keys(CFG).forEach(function (id) {
    var c = CFG[id], box = document.querySelector('[data-chart="' + id + '"]');
    var svg = el('svg', { 'class': 'plot', viewBox: '0 0 740 378' });
    box.insertBefore(svg, box.firstChild);
    var clipId = 'clip-' + id, mainB = c.mainB || B;
    var cp = el('clipPath', { id: clipId }, svg);
    el('rect', { x: L, y: T, width: R - L, height: mainB - T }, cp);
    var ty = function (y) { return Math.round(y * S - c.top) + 0.5; };
    var toLocal = function (p) { return p.map(function (q) { return [q[0] * S - c.left, q[1] * S - c.top]; }); };

    for (var n = 1; L + 35.15 * n < R; n++) {
      var vx = Math.round(L + 35.15 * n) + 0.5;
      el('line', dashes(vx, T, vx, B), svg);
    }
    c.prices.forEach(function (p) {
      var y = ty(p[1]);
      el('line', dashes(L, y, R, y), svg);
      el('line', { x1: R, y1: y, x2: R + 5, y2: y, stroke: '#fff' }, svg);
      el('text', { x: R + 7, y: y + 4, fill: '#f2f2f2' }, svg, p[0]);
    });

    var g = el('g', { 'clip-path': 'url(#' + clipId + ')' }, svg);
    var r = rng(c.seed), pts = toLocal(c.curve), wick = '', white = '', black = '';
    var prev = pts[0][1], end = pts[pts.length - 1][0];
    for (var x = L + 2; x < end; x += c.step) {
      var t = interp(pts, x), cl = t + (r() - 0.5) * c.amp, op = prev;
      if (Math.abs(cl - op) > c.amp * 1.3) op = cl + (op > cl ? 1 : -1) * c.amp * (0.4 + r() * 0.8);
      var sp = r(); sp = sp * sp;
      var hi = Math.min(op, cl) - sp * c.amp * 0.9;
      sp = r(); sp = sp * sp;
      var lo = Math.max(op, cl) + sp * c.amp * 0.9;
      var px = Math.round(x) + 0.5, top = Math.round(Math.min(op, cl)), h = Math.max(2, Math.round(Math.abs(op - cl)));
      wick += 'M' + px + ' ' + hi.toFixed(0) + 'V' + lo.toFixed(0);
      var body = 'M' + (px - c.bw / 2) + ' ' + (top + 0.5) + 'h' + c.bw + 'v' + h + 'h-' + c.bw + 'z';
      if (r() < 0.42) white += body; else black += body;
      prev = cl;
    }
    el('path', { d: wick, stroke: '#00ff00', fill: 'none' }, g);
    el('path', { d: black, stroke: '#00ff00', fill: '#000' }, g);
    el('path', { d: white, stroke: '#00ff00', fill: '#fff' }, g);
    if (c.ma) el('path', { d: smooth(toLocal(c.ma)), stroke: '#cc1414', fill: 'none', 'stroke-width': 1.1 }, g);

    var ly = ty(c.last[1]);
    var la = { x1: L, y1: ly, x2: R, y2: ly, stroke: '#8d9aa8' };
    if (c.dashLast) la['stroke-dasharray'] = '3 2';
    el('line', la, svg);
    el('rect', { x: R + 2, y: ly - 6, width: 40, height: 12, fill: '#7d8a96' }, svg);
    el('text', { x: R + 5, y: ly + 4, fill: '#fff' }, svg, c.last[0]);

    if (c.sub) {
      var sb = c.sub, st = mainB + 2;
      el('rect', { x: L - 1, y: mainB - 1, width: R - L + 2, height: 3, fill: '#c4c4c4' }, svg);
      el('rect', { x: L, y: mainB + 2, width: R - L, height: B - mainB - 2, fill: '#000' }, svg);
      for (var k = 1; L + 35.15 * k < R; k++) {
        var sx = Math.round(L + 35.15 * k) + 0.5;
        el('line', dashes(sx, st, sx, B), svg);
      }
      var zmap = function (p) { return p.map(function (q) { return [q[0] / 2.036 - 8, 222 + q[1] / 3]; }); };
      sb.levels.forEach(function (v) {
        var y = Math.round(v[1] - c.top) + 0.5;
        if (v[2]) el('line', dashes(L, y, R, y), svg);
        el('line', { x1: R, y1: y, x2: R + 5, y2: y, stroke: '#fff' }, svg);
        el('text', { x: R + 7, y: y + 4, fill: '#f2f2f2' }, svg, v[0]);
      });
      if (sb.type === 'cci') {
        el('path', { d: poly(zmap(sb.line)), stroke: '#20a8a8', fill: 'none' }, svg);
      } else {
        var hp = zmap(sb.hist), base = 222 + 60, d = '';
        for (var hx = L + 1; hx < hp[hp.length - 1][0]; hx += 4.39) {
          d += 'M' + (Math.round(hx) + 0.5) + ' ' + base + 'V' + interp(hp, hx).toFixed(0);
        }
        el('path', { d: d, stroke: '#b8b8b8', fill: 'none' }, svg);
        el('path', { d: smooth(zmap(sb.line)), stroke: '#e00000', fill: 'none', 'stroke-dasharray': '4 2', 'stroke-width': 1.2 }, svg);
      }
      el('text', { x: L + 5, y: st + 12, fill: '#f2f2f2' }, svg, sb.title);
    }

    el('rect', { x: L + 0.5, y: T + 0.5, width: R - L, height: B - T, fill: 'none', stroke: '#f0f0f0' }, svg);
    c.times.forEach(function (lbl, i) {
      var tx = Math.round(L + 70.3 * i) + 0.5;
      el('line', { x1: tx, y1: B, x2: tx, y2: B + 5, stroke: '#fff' }, svg);
      el('text', { x: tx - 1, y: B + 14, fill: '#f2f2f2' }, svg, lbl);
    });
  });
})();
```
